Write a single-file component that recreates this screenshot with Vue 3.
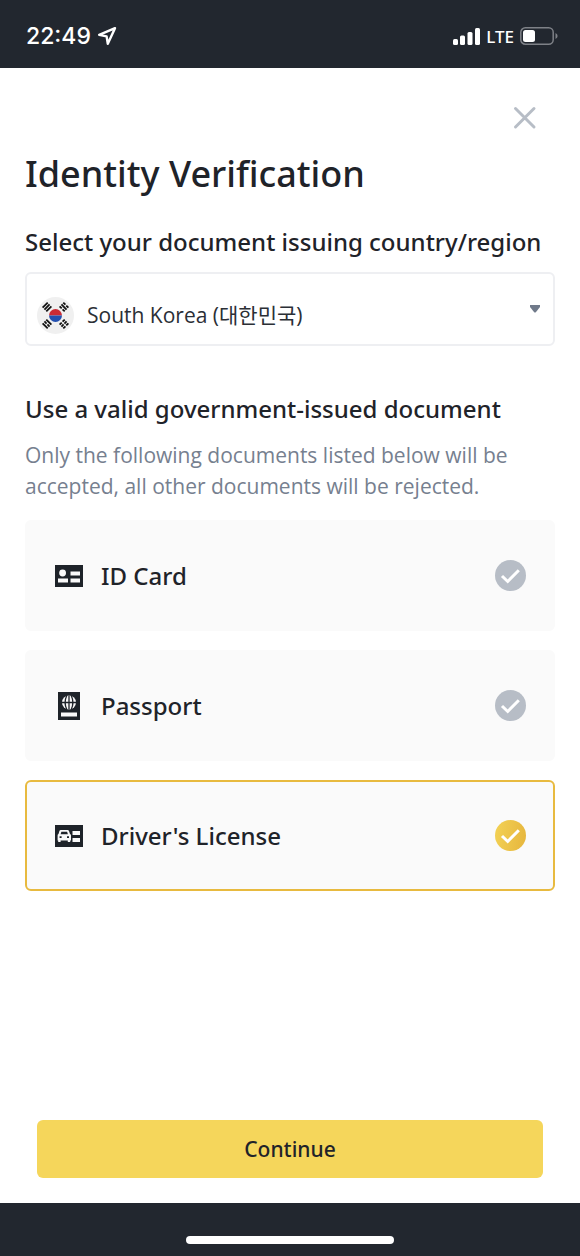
<template>
  <div class="page">
    <header class="status-bar">
      <div class="status-left">
        <span class="time">22:49</span>
        <svg class="location" viewBox="0 0 20 20" aria-hidden="true">
          <path d="M18 2.2 L2.2 8.8 L9.6 10.4 L10.8 17.8 Z" />
        </svg>
      </div>
      <div class="status-right">
        <svg class="signal" viewBox="0 0 27 17" aria-hidden="true">
          <rect x="0" y="11" width="5" height="6" rx="1.5" />
          <rect x="7" y="7.5" width="5" height="9.5" rx="1.5" />
          <rect x="14.5" y="4" width="5" height="13" rx="1.5" />
          <rect x="22" y="0" width="5" height="17" rx="1.5" />
        </svg>
        <span class="network">LTE</span>
        <svg class="battery" viewBox="0 0 38 18" aria-hidden="true">
          <rect class="battery-shell" x="0.8" y="0.8" width="32.4" height="16.4" rx="4.5" />
          <rect x="3" y="3" width="12" height="12" rx="2.5" fill="#fff" />
          <path d="M35.5 6 Q37.6 7 37.6 9 Q37.6 11 35.5 12 Z" fill="#7e8187" />
        </svg>
      </div>
    </header>

    <main class="content">
      <button class="close" type="button" aria-label="Close">
        <svg viewBox="0 0 24 24" aria-hidden="true">
          <path d="M2.5 2.5 L21 21 M21 2.5 L2.5 21" />
        </svg>
      </button>

      <h1 class="title">Identity Verification</h1>

      <label class="heading" for="country">Select your document issuing country/region</label>
      <div class="country">
        <svg class="flag" viewBox="0 0 37 37" aria-hidden="true">
          <circle cx="18.5" cy="18.5" r="18.5" fill="#f0f0f0" />
          <path d="M12 18.5 a6.5 6.5 0 0 1 13 0 Z" fill="#cb2b35" />
          <path d="M12 18.5 a6.5 6.5 0 0 0 13 0 Z" fill="#2350b0" />
          <g v-for="t in trigrams" :key="t.id" :transform="t.transform">
            <path class="trigram" :d="t.bars" />
          </g>
        </svg>
        <select id="country" v-model="country">
          <option value="KR">South Korea (대한민국)</option>
        </select>
        <svg class="caret" viewBox="0 0 10 8" aria-hidden="true">
          <path d="M0 0 H10 V2 L6 7 Q5 8 4 7 L0 2 Z" />
        </svg>
      </div>

      <fieldset class="documents">
        <legend class="heading">Use a valid government-issued document</legend>
        <p class="hint">
          Only the following documents listed below will be accepted, all other documents will be rejected.
        </p>

        <label
          v-for="doc in documents"
          :key="doc.id"
          class="doc"
          :class="{ selected: selected === doc.id }"
        >
          <svg class="doc-icon" viewBox="0 0 30 30" aria-hidden="true">
            <template v-if="doc.id === 'id'">
              <path d="M1 4 H29 V26 H1 Z" />
              <g fill="#fafafa">
                <circle cx="8.6" cy="12" r="3.4" />
                <path d="M4 17.6 H14 V21.6 H4 Z M16.5 10.4 H26 V14.4 H16.5 Z M16.5 17.6 H26 V21.6 H16.5 Z" />
              </g>
            </template>
            <template v-else-if="doc.id === 'passport'">
              <path d="M4 1 H26 V29 H4 Z" />
              <circle cx="15" cy="11.5" r="7" fill="#fafafa" />
              <path class="globe" d="M8 11.5 H22 M12.8 4.5 Q9.4 11.5 12.8 18.5 M17.2 4.5 Q20.6 11.5 17.2 18.5 M15 4.5 V18.5" />
              <path d="M7 21.5 H23 V25.5 H7 Z" fill="#fafafa" />
            </template>
            <template v-else>
              <path d="M1 4 H29 V26 H1 Z" />
              <path
                fill="#fafafa"
                fill-rule="evenodd"
                d="M6.8 9 H13.6 Q14.6 9 15 10 L16 13 Q17 13.4 17 14.6 V19.5 H16.2 V21 H13.8 V19.5 H6.6 V21 H4.2 V19.5 H3.6 V14.6 Q3.6 13.4 4.5 13 L5.4 10 Q5.8 9 6.8 9 Z M7.4 10.8 L6.6 13.2 H13.9 L13.1 10.8 Z M5.6 15.3 V17.1 H7.6 V15.3 Z M13 15.3 V17.1 H15 V15.3 Z"
              />
              <path d="M18.5 10 H26 V14 H18.5 Z M18.5 17 H26 V21 H18.5 Z" fill="#fafafa" />
            </template>
          </svg>
          <span class="doc-name">{{ doc.name }}</span>
          <span class="check">
            <input v-model="selected" type="radio" name="document" :value="doc.id" />
            <svg viewBox="0 0 31 31" aria-hidden="true">
              <path d="M7 16 L12.7 21.5 L23.8 10.2" />
            </svg>
          </span>
        </label>
      </fieldset>

      <button class="continue" type="button">Continue</button>
    </main>

    <footer class="home-bar">
      <span class="home-indicator"></span>
    </footer>
  </div>
</template>

<script setup>
import { ref } from 'vue'

const country = ref('KR')
const selected = ref('license')

const documents = [
  { id: 'id', name: 'ID Card' },
  { id: 'passport', name: 'Passport' },
  { id: 'license', name: "Driver's License" },
]

const trigrams = [
  { id: 'geon', transform: 'translate(10 10) rotate(-45)', bars: 'M-3.6 -2.6 H3.6 M-3.6 0 H3.6 M-3.6 2.6 H3.6' },
  { id: 'gam', transform: 'translate(27 10) rotate(45)', bars: 'M-3.6 -2.6 H-0.6 M0.6 -2.6 H3.6 M-3.6 0 H3.6 M-3.6 2.6 H-0.6 M0.6 2.6 H3.6' },
  { id: 'ri', transform: 'translate(10 27) rotate(45)', bars: 'M-3.6 -2.6 H3.6 M-3.6 0 H-0.6 M0.6 0 H3.6 M-3.6 2.6 H3.6' },
  { id: 'gon', transform: 'translate(27 27) rotate(-45)', bars: 'M-3.6 -2.6 H-0.6 M0.6 -2.6 H3.6 M-3.6 0 H-0.6 M0.6 0 H3.6 M-3.6 2.6 H-0.6 M0.6 2.6 H3.6' },
]
</script>

<style>
body {
  margin: 0;
  background: #fff;
}
</style>

<style scoped>
.page {
  display: flex;
  flex-direction: column;
  min-height: 100vh;
  font-family: 'Noto Sans', 'Noto Sans CJK KR', sans-serif;
  color: #1f2329;
}

.page * {
  box-sizing: border-box;
}

.status-bar {
  display: flex;
  justify-content: space-between;
  align-items: center;
  height: 68px;
  padding: 4px 22px 0 26px;
  background: #22272f;
  color: #fff;
}

.status-left,
.status-right {
  display: flex;
  align-items: center;
  gap: 6px;
}

.time {
  font-family: Inter, sans-serif;
  font-size: 23px;
  font-weight: 500;
}

.location {
  width: 20px;
  height: 20px;
  fill: none;
  stroke: #fff;
  stroke-width: 2.4;
  stroke-linejoin: round;
}

.signal {
  width: 27px;
  height: 17px;
  fill: #fff;
}

.network {
  font-size: 17px;
  font-weight: 500;
}

.battery {
  width: 38px;
  height: 18px;
}

.battery-shell {
  fill: none;
  stroke: #7e8187;
  stroke-width: 1.5;
}

.content {
  display: flex;
  flex: 1;
  flex-direction: column;
  padding: 32px 25px 25px;
}

.close {
  align-self: flex-end;
  width: 36px;
  height: 36px;
  margin-right: 12px;
  padding: 6px;
  border: 0;
  background: none;
  cursor: pointer;
}

.close svg {
  display: block;
  width: 24px;
  height: 24px;
  fill: none;
  stroke: #b7bdc6;
  stroke-width: 3;
  stroke-linecap: round;
}

.title {
  margin: 12px 0 0;
  font-size: 36px;
  font-weight: 500;
  line-height: 52px;
}

.heading {
  padding: 0;
  font-size: 24px;
  font-weight: 500;
  line-height: 32px;
}

.title + .heading {
  margin-top: 26px;
}

.country {
  display: flex;
  align-items: center;
  height: 74px;
  margin-top: 14px;
  padding: 0 13px 0 10px;
  border: 2px solid #eeeff2;
  border-radius: 6px;
}

.flag {
  flex: none;
  width: 37px;
  height: 37px;
  margin-top: 12px;
}

.trigram {
  fill: none;
  stroke: #111;
  stroke-width: 1.8;
}

.country select {
  flex: 1;
  min-width: 0;
  height: 58px;
  margin-top: 12px;
  padding: 0 0 0 13px;
  border: 0;
  background: none;
  appearance: none;
  font-family: 'Open Sans', 'Noto Sans CJK KR', sans-serif;
  font-size: 21px;
  color: #2b2f36;
}

.caret {
  flex: none;
  width: 10px;
  height: 8px;
  fill: #707a8a;
}

.documents {
  min-width: 0;
  margin: 47px 0 0;
  padding: 0;
  border: 0;
}

.hint {
  margin: 15px 0 18px;
  font-family: 'Open Sans', sans-serif;
  font-size: 21px;
  line-height: 31px;
  color: #76808f;
}

.doc {
  display: flex;
  align-items: center;
  height: 111px;
  padding: 0 27px;
  border: 2px solid #fafafa;
  border-radius: 6px;
  background: #fafafa;
  cursor: pointer;
}

.doc + .doc {
  margin-top: 19px;
}

.doc.selected {
  border-color: #e8ba3f;
}

.doc-icon {
  flex: none;
  width: 30px;
  height: 30px;
  fill: #1e2329;
}

.globe {
  fill: none;
  stroke: #1e2329;
  stroke-width: 1.3;
}

.doc-name {
  flex: 1;
  margin-left: 17px;
  font-size: 24px;
  font-weight: 500;
}

.check {
  position: relative;
  flex: none;
  width: 31px;
  height: 31px;
}

.check input {
  display: block;
  width: 31px;
  height: 31px;
  margin: 0;
  border-radius: 50%;
  background: #b7bdc6;
  appearance: none;
  cursor: pointer;
}

.check input:checked {
  background: linear-gradient(100deg, #f3d255, #e6b53c);
}

.check svg {
  position: absolute;
  inset: 0;
  fill: none;
  stroke: #fff;
  stroke-width: 3;
  pointer-events: none;
}

.continue {
  height: 58px;
  margin: auto 12px 0;
  border: 0;
  border-radius: 6px;
  background: #f5d65b;
  color: #1f2329;
  font: inherit;
  font-size: 21px;
  font-weight: 500;
  cursor: pointer;
}

.home-bar {
  display: flex;
  justify-content: center;
  align-items: flex-end;
  height: 53px;
  padding-bottom: 12px;
  background: #22272f;
}

.home-indicator {
  width: 36%;
  height: 8px;
  border-radius: 4px;
  background: #fff;
}
</style>
